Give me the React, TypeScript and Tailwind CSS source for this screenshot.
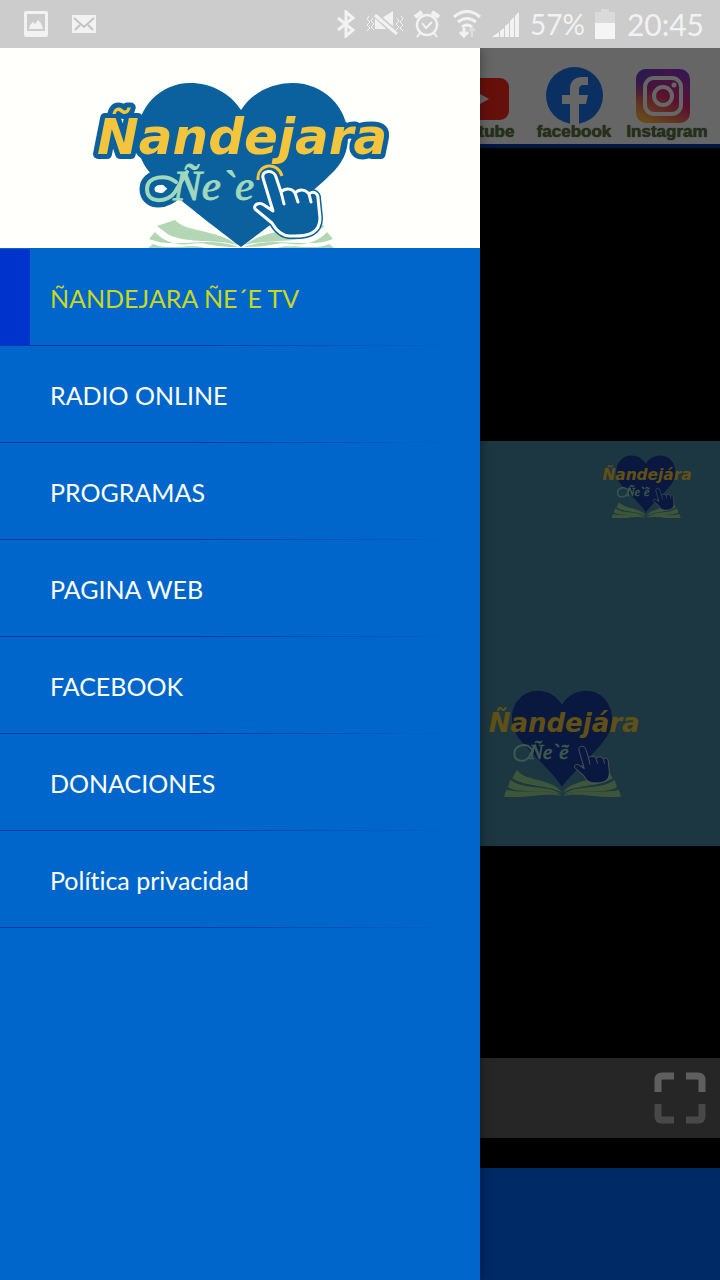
import React from "react";

const HAND =
  "M263 130C261 122 274 121 276 129L281 144C286 139 293 141 295 145C300 140 306 142 309 146C314 142 318 146 318 150L320 170C320 184 310 189 290 188C282 188 276 182 272 175L255 161C253 156 260 154 264 157L273 163Z";
const HAND_FINGERS = "M281 144L284 156M295 145L298 154M309 146L311 154";

function BrandLogo() {
  const pages = (
    <>
      <path d="M175 172C185 184 215 181 238 197C215 191 190 196 169 187L157 178Z" />
      <path d="M155 184L149 191C175 202 205 187 238 199C210 199 205 193 190 196C176 198 163 193 155 184Z" />
      <path d="M153 196L148 200H205C190 195 168 203 153 196Z" />
    </>
  );
  return (
    <svg viewBox="0 0 480 200" className="block w-full" role="img" aria-label="Ñandejara Ñe`e">
      <g fill="#b3d6b5">
        {pages}
        <g transform="translate(482 0) scale(-1 1)">{pages}</g>
      </g>
      <path
        fill="#0a619e"
        d="M241 62C230 45 211 35 190 35C161 35 137 59 137 89C137 105 143 118 153 128C165 139 183 155 241 199C300 155 318 139 331 126C342 116 348 104 348 89C348 59 323 35 293 35C271 35 252 45 241 62Z"
      />
      <path
        d="M178 134C166 126 147 128 147 141C147 156 168 155 176 142L188 122"
        fill="none"
        stroke="#0a619e"
        strokeWidth="15"
        strokeLinecap="round"
      />
      <text
        x="97"
        y="106"
        fontFamily="DejaVu Sans, sans-serif"
        fontSize="50"
        fontWeight="700"
        fontStyle="italic"
        fill="#f2c53d"
        stroke="#0a619e"
        strokeWidth="10"
        strokeLinejoin="round"
        paintOrder="stroke"
      >
        Ñandejara
      </text>
      <path
        d="M176 134C166 126 147 128 147 141C147 156 168 155 175 144L187 124"
        fill="none"
        stroke="#9fd8bd"
        strokeWidth="4"
        strokeLinecap="round"
      />
      <circle cx="161" cy="141" r="4" fill="#fff" />
      <text
        x="173"
        y="152"
        fill="#9fd8bd"
        stroke="#9fd8bd"
        strokeWidth="1"
        fontFamily="Liberation Serif, serif"
        fontStyle="italic"
        fontSize="43"
      >
        Ñe`e
      </text>
      <path d="M258 132C257 115 278 113 282 128" fill="none" stroke="#f2c53d" strokeWidth="3" />
      <path d={HAND} fill="#0a619e" stroke="#0a619e" strokeWidth="6" strokeLinejoin="round" />
      <path d={HAND + HAND_FINGERS} fill="#0a619e" stroke="#fff" strokeWidth="3" strokeLinejoin="round" strokeLinecap="round" />
    </svg>
  );
}

function WatermarkLogo({ className }: { className: string }) {
  const pages = (
    <>
      <path d="M127 300C150 335 235 325 262 368C225 345 155 352 113 325Z" />
      <path d="M107 330C150 362 220 342 262 374C210 353 140 375 100 352Z" />
      <path d="M95 359C150 375 215 350 262 378C210 366 160 386 88 380Z" />
    </>
  );
  return (
    <svg viewBox="40 60 456 324" className={className} role="img" aria-label="Ñandejára Ñe`ẽ">
      <path
        fill="#183c9c"
        d="M262 104C245 76 218 62 190 62C145 62 112 98 112 143C112 180 130 205 155 230C195 275 235 310 262 350C290 310 340 270 375 228C400 200 412 178 412 145C412 98 378 62 335 62C305 62 278 76 262 104Z"
      />
      <g fill="#98d890">
        {pages}
        <g transform="translate(527 0) scale(-1 1)">{pages}</g>
      </g>
      <text
        x="42"
        y="185"
        fill="#f0c838"
        fontFamily="DejaVu Sans, sans-serif"
        fontWeight="700"
        fontStyle="italic"
        fontSize="78"
      >
        Ñandejára
      </text>
      <path
        d="M172 240C155 215 120 225 119 250C119 280 155 278 166 256L182 226"
        fill="none"
        stroke="#98dfc4"
        strokeWidth="6"
        strokeLinecap="round"
      />
      <text
        x="164"
        y="268"
        fill="#98dfc4"
        stroke="#98dfc4"
        strokeWidth="2"
        fontFamily="Liberation Serif, serif"
        fontStyle="italic"
        fontSize="62"
      >
        Ñe`ẽ
      </text>
      <g transform="translate(-108 19) scale(1.6 1.7)">
        <path d={HAND + HAND_FINGERS} fill="#183c9c" stroke="#e6ecf5" strokeWidth="1.4" strokeLinejoin="round" />
      </g>
    </svg>
  );
}

function StatusBar() {
  return (
    <div className="flex h-12 items-center justify-between bg-[#cccccc] pl-6 pr-4 font-[Lato,sans-serif] text-[#f2f2f2]">
      <div className="flex items-center gap-6">
        <svg width="24" height="26" viewBox="0 0 24 26" fill="currentColor">
          <path fillRule="evenodd" d="M2 0H22Q24 0 24 2V24Q24 26 22 26H2Q0 26 0 24V2Q0 0 2 0ZM3 3V20H21V3Z" />
          <path d="M5 18L6 14L9 11L11 13L14 9L17 12L19 18Z" />
        </svg>
        <svg width="24" height="18" viewBox="0 0 24 18">
          <path d="M0 0H24V18H0Z" fill="currentColor" />
          <path d="M2 3L12 12L22 3M3 15L8 10M21 15L16 10" fill="none" stroke="#c4c4c4" strokeWidth="2" />
        </svg>
      </div>
      <div className="flex items-center gap-2.5">
        <svg width="20" height="28" viewBox="0 0 20 28" fill="none" stroke="currentColor" strokeWidth="3">
          <path d="M2 8L17 20L10 26V2L17 8L2 20" />
        </svg>
        <svg width="38" height="28" viewBox="0 0 38 28" fill="currentColor">
          <path
            d="M3 6L1 9L4 12L1 15L4 18L1 21M7 8L5 11L8 14L5 17L8 20M35 6L37 9L34 12L37 15L34 18L37 21M31 8L33 11L30 14L33 17L30 20"
            fill="none"
            stroke="currentColor"
          />
          <path d="M9 8L23 19H9ZM16 8L27 1V16Z" />
          <path d="M9 4L31 25" fill="none" stroke="#cccccc" strokeWidth="6" />
          <path d="M9 5L31 24" fill="none" stroke="currentColor" strokeWidth="3" />
        </svg>
        <svg width="26" height="28" viewBox="0 0 26 28" fill="none" stroke="currentColor" strokeWidth="3">
          <circle cx="13" cy="15" r="10" strokeWidth="2.500" />
          <path d="M8 13L12 18L18 12M6 23L3 27M20 23L23 27" strokeWidth="2" />
          <path d="M1 7L8 2M25 7L18 2" strokeWidth="4" />
        </svg>
        <svg width="32" height="28" viewBox="0 0 32 28" fill="none" stroke="currentColor" strokeWidth="3">
          <path d="M4 7Q17 -4 30 7M8 12Q17 5 26 12M12 17Q17 13 22 17" />
          <path d="M14 18V26M10 22L14 26L18 22" />
          <path d="M22 27V19M19 21L22 18L25 21" stroke="#dedede" strokeWidth="2" />
        </svg>
        <svg width="28" height="26" viewBox="0 0 28 26" fill="currentColor">
          <path d="M0 26L7 21V26ZM8 20L12 17V26H8ZM13 15L17 12V26H13ZM18 10L22 6V26H18ZM23 5L27 1V26H23Z" />
        </svg>
        <span className="text-[28px] leading-8">57%</span>
        <svg width="20" height="30" viewBox="0 0 20 30">
          <path d="M6 0H14V3H20V30H0V3H6Z" fill="#dadada" />
          <path d="M0 14H20V30H0Z" fill="#f5f5f5" />
        </svg>
        <span className="pl-0.5 text-[30px] leading-8">20:45</span>
      </div>
    </div>
  );
}

function YoutubeIcon() {
  return (
    <svg width="60" height="42" viewBox="0 0 60 42" className="mr-1 mb-1">
      <rect width="60" height="42" rx="9" fill="#ff2a1c" />
      <path d="M24 12L40 21L24 30Z" fill="#fff" />
    </svg>
  );
}

function FacebookIcon() {
  return (
    <svg width="57" height="57" viewBox="0 0 57 57">
      <circle cx="28.500" cy="28.500" r="28.500" fill="#1b78f2" />
      <path d="M24 57V37H16V28H24V22C24 14 29 10 36 10H42V18H38C34 18 33 20 33 23V28H42L40 37H33V57Z" fill="#fff" />
    </svg>
  );
}

function InstagramIcon() {
  return (
    <svg width="54" height="54" viewBox="0 0 54 54" className="mr-2 mb-px">
      <defs>
        <linearGradient id="ig-base" x1="0.800" y1="0" x2="0.300" y2="1">
          <stop offset="0" stopColor="#8a3ad0" />
          <stop offset="0.500" stopColor="#e02a78" />
          <stop offset="1" stopColor="#ffb640" />
        </linearGradient>
        <radialGradient id="ig-blue" cx="0" cy="0" r="0.600">
          <stop offset="0" stopColor="#4a48d8" />
          <stop offset="1" stopColor="#4a48d8" stopOpacity="0" />
        </radialGradient>
      </defs>
      <rect width="54" height="54" rx="10" fill="url(#ig-base)" />
      <rect width="54" height="54" rx="10" fill="url(#ig-blue)" />
      <g fill="none" stroke="#fff" strokeWidth="4">
        <rect x="9" y="9" width="36" height="36" rx="9" />
        <circle cx="27" cy="27" r="9" />
      </g>
      <circle cx="38" cy="16" r="2.500" fill="#fff" />
    </svg>
  );
}

function SocialLink({ label, children, className }: { label: string; children: React.ReactNode; className: string }) {
  return (
    <a href="#" className={`flex flex-col items-center justify-end ${className}`}>
      {children}
      <span className="text-[17px] leading-4 font-bold text-[#5c7a3c] [text-shadow:0_0_1px_#222]">{label}</span>
    </a>
  );
}

const MENU = [
  "ÑANDEJARA ÑE´E TV",
  "RADIO ONLINE",
  "PROGRAMAS",
  "PAGINA WEB",
  "FACEBOOK",
  "DONACIONES",
  "Política privacidad",
];

function Drawer() {
  return (
    <aside className="absolute inset-y-0 left-0 w-2/3 bg-[#0066cc] shadow-[0_0_12px_rgba(0,0,0,0.4)]">
      <div className="bg-[#fffffb]">
        <BrandLogo />
      </div>
      <nav className="pt-px">
        <ul>
          {MENU.map((item, i) => (
            <li key={item}>
              <a
                href="#"
                className={`flex h-24 items-center font-[Lato,sans-serif] text-[25px] leading-8 [font-variant-ligatures:none] ${
                  i === 0 ? "text-[#c8d820]" : "text-white"
                }`}
              >
                <span className={`mr-5 h-full w-[30px] ${i === 0 ? "bg-[#0033cc]" : ""}`} />
                <span className="pt-0.5">{item}</span>
              </a>
              <div className="h-px bg-linear-to-r from-[#0038a8] from-40% to-[#0066cc] to-95%" />
            </li>
          ))}
        </ul>
      </nav>
    </aside>
  );
}

export default function App() {
  return (
    <div className="flex min-h-screen flex-col font-['Liberation_Sans',sans-serif]">
      <StatusBar />
      <div className="relative flex flex-1 flex-col overflow-hidden">
        <header className="flex h-[100px] justify-end gap-3 border-b-4 border-[#0038a8] bg-white pr-[11px] pb-1">
          <SocialLink label="Youtube" className="w-[84px]">
            <YoutubeIcon />
          </SocialLink>
          <SocialLink label="facebook" className="w-[78px]">
            <FacebookIcon />
          </SocialLink>
          <SocialLink label="Instagram" className="w-[84px]">
            <InstagramIcon />
          </SocialLink>
        </header>
        <main className="flex flex-1 flex-col bg-black">
          <div className="flex flex-1 flex-col justify-center pt-20">
            <div className="relative aspect-video w-full bg-[#498ba6]">
              <WatermarkLogo className="absolute top-3.5 right-7 w-[90px]" />
              <WatermarkLogo className="absolute right-20 bottom-12 w-[152px]" />
            </div>
          </div>
          <div className="flex h-20 items-center justify-end bg-[#606060] pr-3.5">
            <button type="button" aria-label="Pantalla completa">
              <svg width="52" height="52" viewBox="0 0 52 52" fill="none" strokeWidth="7">
                <path d="M4 20V8Q4 4 8 4H20M32 4H44Q48 4 48 8V20" stroke="#ededed" />
                <path d="M4 32V44Q4 48 8 48H20M32 48H44Q48 48 48 44V32" stroke="#b4b4b4" />
              </svg>
            </button>
          </div>
        </main>
        <footer className="h-[142px] border-t-[30px] border-black bg-[#006aff]" />
        <div className="absolute inset-0 bg-black/60" />
        <Drawer />
      </div>
    </div>
  );
}
